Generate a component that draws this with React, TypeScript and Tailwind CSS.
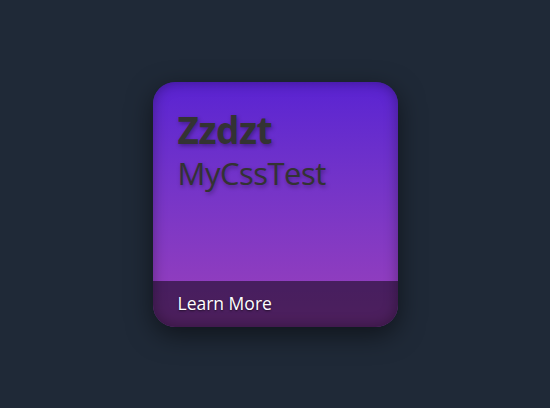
import React from "react";

const App = () => {
  return (
    <div className="w-[550px] h-[408px] bg-[#1f2937] flex items-center justify-center font-['Open_Sans',sans-serif]">
      <div className="relative w-[245px] h-[245px] rounded-[22px] overflow-hidden flex flex-col bg-gradient-to-b from-[#5a22d2] to-[#9b3fba] shadow-[0_8px_26px_rgba(0,0,0,0.5)]">
        <div className="flex-1 flex flex-col pl-[25px] pt-[24px] text-[#333333] [text-shadow:1px_2px_4px_rgba(0,0,0,0.35)]">
          <h1 className="text-[37px] leading-[47px] font-bold tracking-[-0.5px]">Zzdzt</h1>
          <p className="text-[31px] leading-[40px] tracking-[-0.5px]">MyCssTest</p>
        </div>
        <div className="h-[46px] bg-black/50 flex items-center pl-[25px]">
          <span className="text-white text-[17.5px] [text-shadow:0_1px_2px_rgba(0,0,0,0.6)]">Learn More</span>
        </div>
        <div className="absolute inset-0 rounded-[22px] shadow-[inset_0_0_14px_rgba(0,0,0,0.35)] pointer-events-none" />
      </div>
    </div>
  );
};

export default App;
